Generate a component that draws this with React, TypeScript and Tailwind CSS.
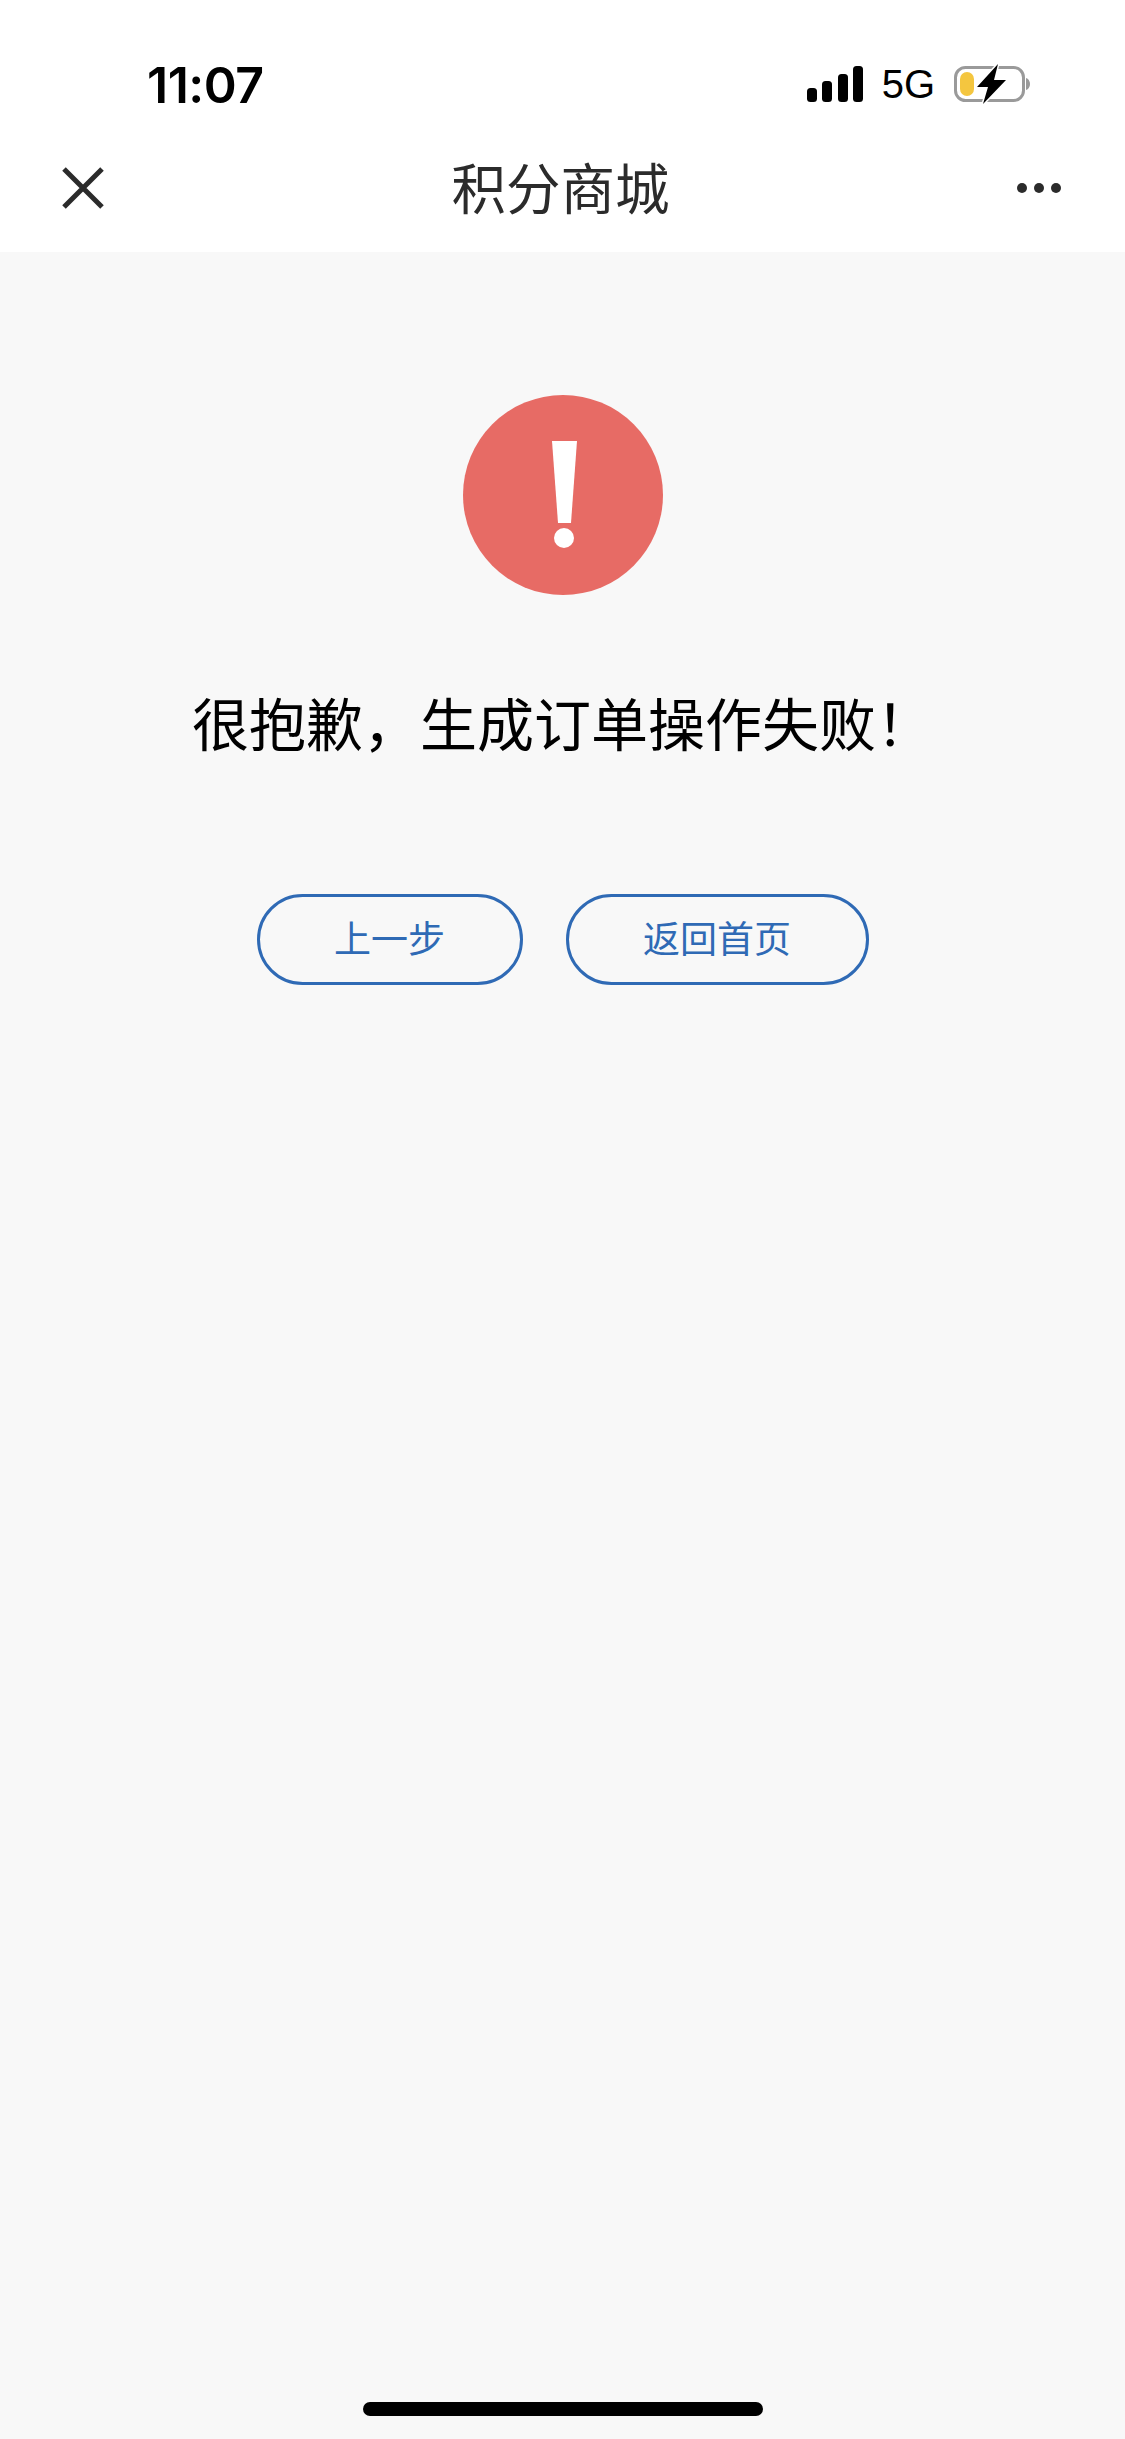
export default function App() {
  const cjk = "font-['Noto_Sans_CJK_SC','Noto_Sans',sans-serif]";
  return (
    <div lang="zh-CN" className={`flex min-h-[2439px] w-[1125px] flex-col bg-[#f8f8f8] ${cjk}`}>
      <header className="h-[252px] bg-white">
        <div className="flex h-[130px] items-start justify-between pl-[147px] pr-[91px] pt-[52px]">
          <span className="mt-[3px] font-['Inter',sans-serif] text-[50px] leading-[60px] font-semibold tracking-[-0.5px] text-black">11:07</span>
          <div className="flex items-center pt-[11px]">
            <svg width="56" height="36" viewBox="0 0 56 36" className="block" aria-hidden="true">
              <rect x="0" y="22" width="10" height="14" rx="3.5" fill="#000" />
              <rect x="15" y="15" width="10" height="21" rx="3.5" fill="#000" />
              <rect x="31" y="8" width="10" height="28" rx="3.5" fill="#000" />
              <rect x="46" y="0" width="10" height="36" rx="3.5" fill="#000" />
            </svg>
            <span className="ml-[19px] font-['Liberation_Sans',sans-serif] text-[40px] leading-[36px] text-black">5G</span>
            <svg width="80" height="42" viewBox="0 0 80 42" className="ml-[19px] block" aria-hidden="true">
              <rect x="1.500" y="4.500" width="68" height="33" rx="10" fill="none" stroke="#9a9a9a" strokeWidth="3" />
              <path d="M72 15c2.500.8 4 3 4 6s-1.500 5.200-4 6z" fill="#9a9a9a" />
              <rect x="6" y="9" width="14" height="24" rx="7" fill="#f4c63f" />
              <path d="M44 1 L23 24 H34 L29 41 L52 17 H40 Z" fill="#000" stroke="#fff" strokeWidth="3" paintOrder="stroke" strokeLinejoin="round" />
            </svg>
          </div>
        </div>
        <nav className="flex h-[116px] items-center justify-between pl-[62px] pr-[64px]">
          <svg width="42" height="42" viewBox="0 0 42 42" className="block" aria-hidden="true">
            <path d="M2 2 L40 40 M40 2 L2 40" stroke="#2b2b2b" strokeWidth="5" fill="none" />
          </svg>
          <h1 className="pb-[5px] text-[54.500px] leading-[70px] font-normal text-[#2b2b2b]">积分商城</h1>
          <div className="flex w-[44px] justify-between">
            <span className="size-[10px] rounded-full bg-[#2b2b2b]" />
            <span className="size-[10px] rounded-full bg-[#2b2b2b]" />
            <span className="size-[10px] rounded-full bg-[#2b2b2b]" />
          </div>
        </nav>
      </header>
      <main className="flex flex-1 flex-col items-center pt-[143px]">
        <svg width="200" height="200" viewBox="0 0 200 200" className="block" aria-hidden="true">
          <circle cx="100" cy="100" r="100" fill="#e76b65" />
          <path d="M89 46 H114 L108 128 H95 Z" fill="#fff" />
          <circle cx="101" cy="143" r="10" fill="#fff" />
        </svg>
        <p className="mt-[87px] text-[57px] leading-[78px] font-normal text-black">很抱歉，生成订单操作失败！</p>
        <div className="mt-[134px] flex gap-[43px]">
          <button className="h-[91px] w-[266px] rounded-[46px] border-[3px] border-[#2f6ab5] pb-[4px] text-[37px] text-[#2f6ab5]">上一步</button>
          <button className="h-[91px] w-[303px] rounded-[46px] border-[3px] border-[#2f6ab5] pb-[4px] text-[37px] text-[#2f6ab5]">返回首页</button>
        </div>
      </main>
      <div className="flex justify-center pb-[23px]">
        <div className="h-[14px] w-[400px] rounded-full bg-black" />
      </div>
    </div>
  );
}
